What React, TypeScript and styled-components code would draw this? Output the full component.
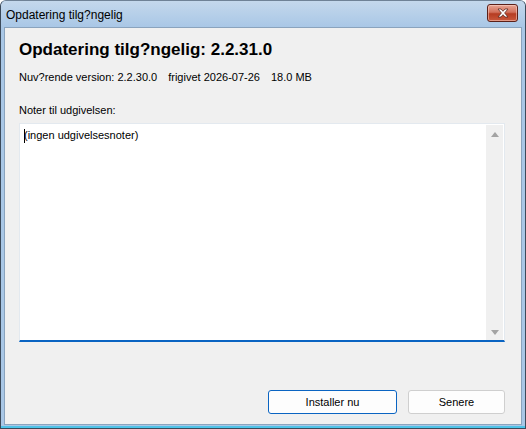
import styled, { createGlobalStyle } from 'styled-components';

const GlobalStyle = createGlobalStyle`
  html, body {
    margin: 0;
    padding: 0;
    background: #ffffff;
  }
  body {
    font-family: "Liberation Sans", Arial, sans-serif;
  }
`;

export default function App() {
  return (
    <>
      <GlobalStyle />
      <Window>
        <TitleBar>
          <TitleText>Opdatering tilg?ngelig</TitleText>
          <CloseButton aria-label="Luk">
            <svg width="14" height="10" viewBox="0 0 14 10">
              <path
                d="M2 1 L5 1 L7 3.3 L9 1 L12 1 L8.6 5 L12 9 L9 9 L7 6.7 L5 9 L2 9 L5.4 5 Z"
                fill="#ffffff"
                stroke="#5a2a22"
                strokeWidth="0.8"
                strokeLinejoin="round"
              />
            </svg>
          </CloseButton>
        </TitleBar>
        <Client>
          <Heading>Opdatering tilg?ngelig: 2.2.31.0</Heading>
          <InfoRow>
            <span>Nuv?rende version: 2.2.30.0</span>
            <span>frigivet 2026-07-26</span>
            <span>18.0 MB</span>
          </InfoRow>
          <NotesLabel>Noter til udgivelsen:</NotesLabel>
          <NotesBox>
            <NotesText>
              <Caret />
              (ingen udgivelsesnoter)
            </NotesText>
            <ScrollBar>
              <Arrow $up />
              <Arrow />
            </ScrollBar>
          </NotesBox>
          <Footer>
            <Button $primary>Installer nu</Button>
            <Button $width={97}>Senere</Button>
          </Footer>
        </Client>
      </Window>
    </>
  );
}

const Window = styled.div`
  width: 526px;
  height: 429px;
  box-sizing: border-box;
  border: 1px solid #3c4a5a;
  border-top-color: #6f8296;
  background: #a9c7e6;
  padding: 0 3px 3px 3px;
  display: flex;
  flex-direction: column;
  border-radius: 6px 6px 0 0;
  overflow: hidden;
  box-shadow: inset 0 -2px 0 #4fc3e8;
`;

const TitleBar = styled.div`
  height: 26px;
  flex: 0 0 26px;
  display: flex;
  align-items: center;
  justify-content: space-between;
  padding: 0 7px 0 5px;
  margin: 0 -3px;
  background: linear-gradient(#c4d8ec, #a9c7e6);
`;

const TitleText = styled.div`
  font-family: "Liberation Sans", Arial, sans-serif;
  font-size: 12px;
  color: #000000;
  padding-top: 2px;
`;

const CloseButton = styled.div`
  width: 31px;
  height: 18px;
  margin-top: -3px;
  box-sizing: border-box;
  border: 1px solid #5b2019;
  border-radius: 3px;
  background: linear-gradient(#e7a493 0%, #d2705b 45%, #b63c22 55%, #c9583c 100%);
  display: flex;
  align-items: center;
  justify-content: center;
  box-shadow: inset 0 0 0 1px rgba(255, 220, 210, 0.5);
`;

const Client = styled.div`
  flex: 1;
  background: #f0f0f0;
  padding: 12px 16px 10px 14px;
  display: flex;
  flex-direction: column;
  border: 1px solid #8aa3bd;
`;

const Heading = styled.h1`
  margin: 0;
  font-family: "Liberation Sans", Arial, sans-serif;
  font-size: 17px;
  font-weight: bold;
  color: #000000;
  line-height: 20px;
`;

const InfoRow = styled.div`
  margin-top: 11px;
  display: flex;
  gap: 11px;
  font-size: 11px;
  line-height: 13px;
  color: #000000;
`;

const NotesLabel = styled.div`
  margin-top: 20px;
  font-size: 11px;
  line-height: 13px;
  color: #000000;
`;

const NotesBox = styled.div`
  margin-top: 6px;
  height: 219px;
  background: #ffffff;
  border: 1px solid #e3e9ef;
  border-bottom: 2px solid #0a64c2;
  display: flex;
  box-sizing: border-box;
`;

const NotesText = styled.div`
  flex: 1;
  padding: 5px 4px;
  font-size: 11px;
  line-height: 13px;
  color: #000000;
  display: flex;
  align-items: flex-start;
`;

const Caret = styled.span`
  display: inline-block;
  width: 1px;
  height: 14px;
  background: #000000;
  margin-right: -1px;
`;

const ScrollBar = styled.div`
  width: 17px;
  margin: 1px 1px 0 0;
  background: #f0f0f0;
  display: flex;
  flex-direction: column;
  justify-content: space-between;
  align-items: center;
  padding: 7px 0 5px;
`;

const Arrow = styled.span<{ $up?: boolean }>`
  width: 0;
  height: 0;
  border-left: 4px solid transparent;
  border-right: 4px solid transparent;
  ${({ $up }) =>
    $up ? 'border-bottom: 5px solid #a3a3a3;' : 'border-top: 5px solid #a3a3a3;'}
`;

const Footer = styled.div`
  margin-top: auto;
  display: flex;
  justify-content: flex-end;
  gap: 11px;
  padding-right: 0;
`;

const Button = styled.button<{ $primary?: boolean; $width?: number }>`
  width: ${({ $width }) => $width ?? 129}px;
  height: 24px;
  box-sizing: border-box;
  border-radius: 3px;
  background: #fdfdfd;
  border: 1px solid ${({ $primary }) => ($primary ? '#0a64c2' : '#cfcfcf')};
  font-family: "Liberation Sans", Arial, sans-serif;
  font-size: 11px;
  color: #000000;
  padding: 0;
`;
